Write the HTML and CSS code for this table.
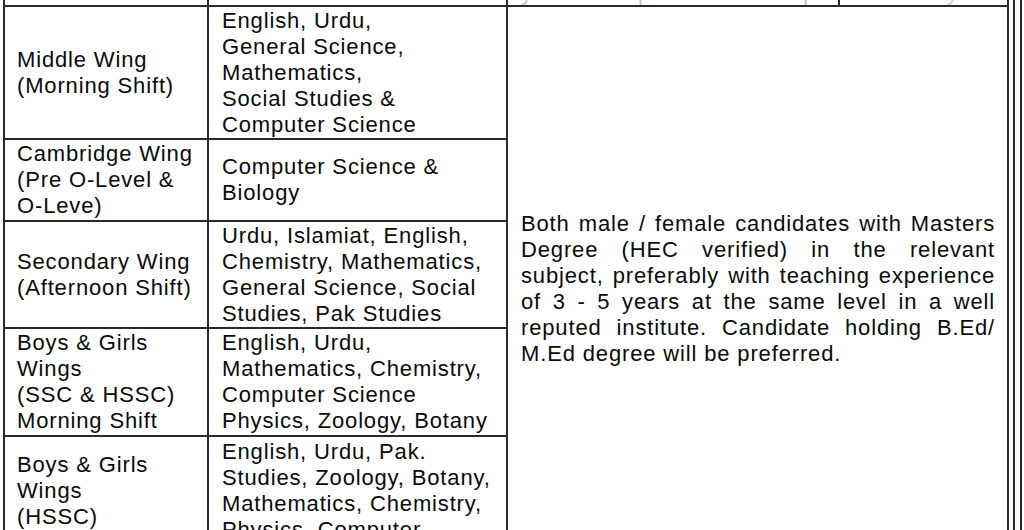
FILE: index.html
```html
<!DOCTYPE html>
<html lang="en">
<head>
<meta charset="utf-8">
<title>Teaching Vacancies</title>
<link rel="stylesheet" href="styles.css">
</head>
<body>
<div class="page">
  <div class="frame-outer">
    <div class="frame-inner">
      <table class="vacancies">
        <colgroup>
          <col class="c-wing">
          <col class="c-subj">
          <col class="c-req">
        </colgroup>
        <tbody>
          <tr class="r0">
            <td></td>
            <td></td>
            <td class="prev">
              <div class="prev-split">
                <span class="prev-a">years of experience in a reputed institution.</span>
                <span class="prev-b">Preferably within city area.</span>
              </div>
            </td>
          </tr>
          <tr class="r1">
            <td class="wing">Middle Wing<br>(Morning Shift)</td>
            <td class="subj">English, Urdu,<br>General Science,<br>Mathematics,<br>Social Studies &amp;<br>Computer Science</td>
            <td class="req" rowspan="5">
              <p class="req-text">
                <span class="ln">Both male / female candidates with Masters</span>
                <span class="ln">Degree (HEC verified) in the relevant</span>
                <span class="ln">subject, preferably with teaching experience</span>
                <span class="ln">of 3 - 5 years at the same level in a well</span>
                <span class="ln">reputed institute. Candidate holding B.Ed/</span>
                <span class="ln last">M.Ed degree will be preferred.</span>
              </p>
            </td>
          </tr>
          <tr class="r2">
            <td class="wing">Cambridge Wing<br>(Pre O-Level &amp;<br>O-Leve)</td>
            <td class="subj">Computer Science &amp;<br>Biology</td>
          </tr>
          <tr class="r3">
            <td class="wing">Secondary Wing<br>(Afternoon Shift)</td>
            <td class="subj">Urdu, Islamiat, English,<br>Chemistry, Mathematics,<br>General Science, Social<br>Studies, Pak Studies</td>
          </tr>
          <tr class="r4">
            <td class="wing">Boys &amp; Girls<br>Wings<br>(SSC &amp; HSSC)<br>Morning Shift</td>
            <td class="subj">English, Urdu,<br>Mathematics, Chemistry,<br>Computer Science<br>Physics, Zoology, Botany</td>
          </tr>
          <tr class="r5">
            <td class="wing">Boys &amp; Girls<br>Wings<br>(HSSC)<br>Evening Shift</td>
            <td class="subj">English, Urdu, Pak.<br>Studies, Zoology, Botany,<br>Mathematics, Chemistry,<br>Physics, Computer<br>Science</td>
          </tr>
        </tbody>
      </table>
    </div>
  </div>
</div>
</body>
</html>
```

FILE: styles.css
```css
html, body {
  margin: 0;
  padding: 0;
  background: #ffffff;
  overflow: hidden;
}

body {
  font-family: "Liberation Sans", Arial, sans-serif;
  color: #0a0a0a;
  font-size: 22px;
  line-height: 26px;
  letter-spacing: 0.85px;
}

.page {
  padding-left: 3px;
  margin-top: -31px;
}

.frame-outer {
  width: 1012px;
  border-right: 2px solid #262626;
  padding-right: 5px;
}

.frame-inner {
  border-right: 2px solid #262626;
  padding-right: 6px;
}

.vacancies {
  border-collapse: collapse;
  table-layout: fixed;
  width: 1004px;
}

.c-wing { width: 204px; }
.c-subj { width: 299px; }
.c-req { width: 501px; }

.vacancies td {
  border: 2px solid #2a2a2a;
  padding: 0 12px 0 13px;
  vertical-align: middle;
  text-align: left;
}

.vacancies .wing {
  padding-left: 12px;
}

.vacancies .subj {
  padding-left: 13px;
}

.r0 td {
  height: 36px;
  padding: 0;
  border-top: none;
}

.prev {
  vertical-align: bottom;
}

.prev-split {
  display: flex;
  height: 36px;
  align-items: flex-end;
  overflow: hidden;
}

.prev-a {
  width: 332px;
  flex: none;
  padding-left: 13px;
  border-right: 2px solid #2a2a2a;
  white-space: nowrap;
  overflow: hidden;
  color: #c4c4c4;
  height: 36px;
  box-sizing: border-box;
  padding-top: 11px;
}

.prev-b {
  flex: 1;
  min-width: 0;
  padding-left: 10px;
  white-space: nowrap;
  overflow: hidden;
  color: #d0d0d0;
  height: 36px;
  box-sizing: border-box;
  padding-top: 11px;
}

.r1 td { height: 131px; }
.r2 td { height: 80px; }
.r3 td { height: 105px; }
.r4 td { height: 106px; }
.r5 td { height: 134px; }

.req {
  padding: 0 12px 0 12px;
}

.req-text {
  margin: 0;
}

.req-text .ln {
  display: block;
  text-align: justify;
  text-align-last: justify;
  white-space: nowrap;
}

.req-text .ln.last {
  text-align-last: left;
}
```
